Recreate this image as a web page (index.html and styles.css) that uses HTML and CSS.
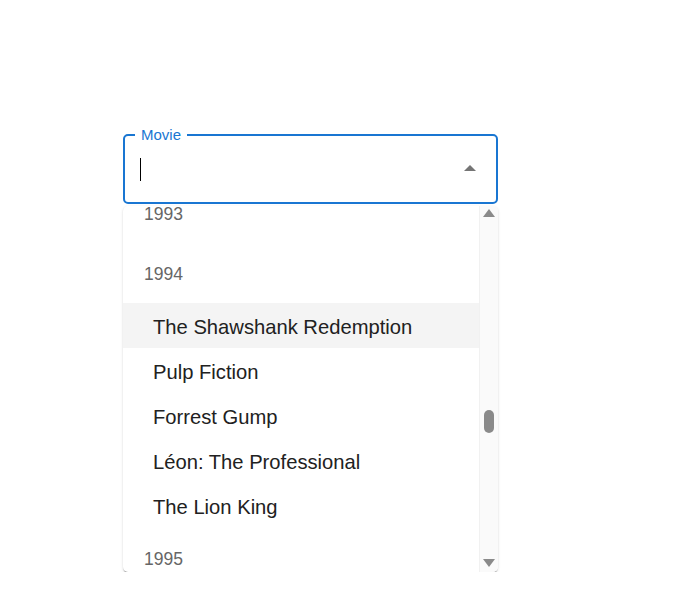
FILE: index.html
```html
<!DOCTYPE html>
<html>
<head>
<meta charset="utf-8">
<link rel="stylesheet" href="styles.css">
</head>
<body>
<div class="wrap">
  <div class="field">
    <span class="label">Movie</span>
    <span class="caret"></span>
    <span class="popup-ind"></span>
  </div>
  <div class="popup">
    <div class="list">
      <div class="inner">
        <div class="group">1993</div>
        <div class="group">1994</div>
        <div class="opt active">The Shawshank Redemption</div>
        <div class="opt">Pulp Fiction</div>
        <div class="opt">Forrest Gump</div>
        <div class="opt">Léon: The Professional</div>
        <div class="opt">The Lion King</div>
        <div class="group">1995</div>
      </div>
    </div>
    <div class="sbar">
      <span class="sb-up"></span>
      <span class="sb-track"><span class="sb-thumb"></span></span>
      <span class="sb-down"></span>
    </div>
  </div>
</div>
</body>
</html>
```
FILE: styles.css
```css
html, body {
  margin: 0;
  padding: 0;
  background: #fff;
  font-family: "Liberation Sans", Arial, sans-serif;
}
.wrap {
  width: 375px;
  margin: 134px 0 0 123px;
}
.field {
  position: relative;
  box-sizing: border-box;
  height: 70px;
  border: 2px solid #1976d2;
  border-radius: 5px;
}
.label {
  position: absolute;
  left: 10px;
  top: -10px;
  padding: 0 6px 0 6px;
  background: #fff;
  color: #1976d2;
  font-size: 15px;
  line-height: 17px;
}
.caret {
  position: absolute;
  left: 15px;
  top: 22px;
  width: 1px;
  height: 23px;
  background: #000;
}
.popup-ind {
  position: absolute;
  right: 20px;
  top: 29px;
  width: 0;
  height: 0;
  border-left: 6px solid transparent;
  border-right: 6px solid transparent;
  border-bottom: 6px solid #757575;
}
.popup {
  display: flex;
  margin-top: 2px;
  height: 366px;
  background: #fff;
  border-radius: 5px;
  overflow: hidden;
  box-shadow: 0 2px 1px -1px rgba(0,0,0,0.2), 0 1px 1px 0 rgba(0,0,0,0.14), 0 1px 3px 0 rgba(0,0,0,0.12);
}
.list {
  flex: 1;
  overflow: hidden;
}
.inner {
  margin-top: -23px;
}
.group {
  box-sizing: border-box;
  height: 60px;
  line-height: 59px;
  padding: 2px 0 0 21px;
  font-size: 17.5px;
  color: #666;
}
.opt {
  box-sizing: border-box;
  height: 45px;
  display: flex;
  align-items: center;
  padding: 3px 0 0 30px;
  font-size: 20.2px;
  color: #212121;
}
.opt.active {
  background: #f4f4f4;
}
.sbar {
  width: 19px;
  background: #fafafa;
  border-left: 1px solid #f1f1f1;
  display: flex;
  flex-direction: column;
  align-items: center;
  padding: 3px 0 5px;
  box-sizing: border-box;
}
.sb-up, .sb-down {
  width: 0;
  height: 0;
  border-left: 6px solid transparent;
  border-right: 6px solid transparent;
}
.sb-up {
  border-bottom: 8px solid #8a8a8a;
}
.sb-down {
  border-top: 8px solid #8a8a8a;
}
.sb-track {
  flex: 1;
  width: 100%;
  display: flex;
  justify-content: center;
}
.sb-thumb {
  margin-top: 193px;
  width: 10px;
  height: 23px;
  border-radius: 5px;
  background: #8a8a8a;
}
```
